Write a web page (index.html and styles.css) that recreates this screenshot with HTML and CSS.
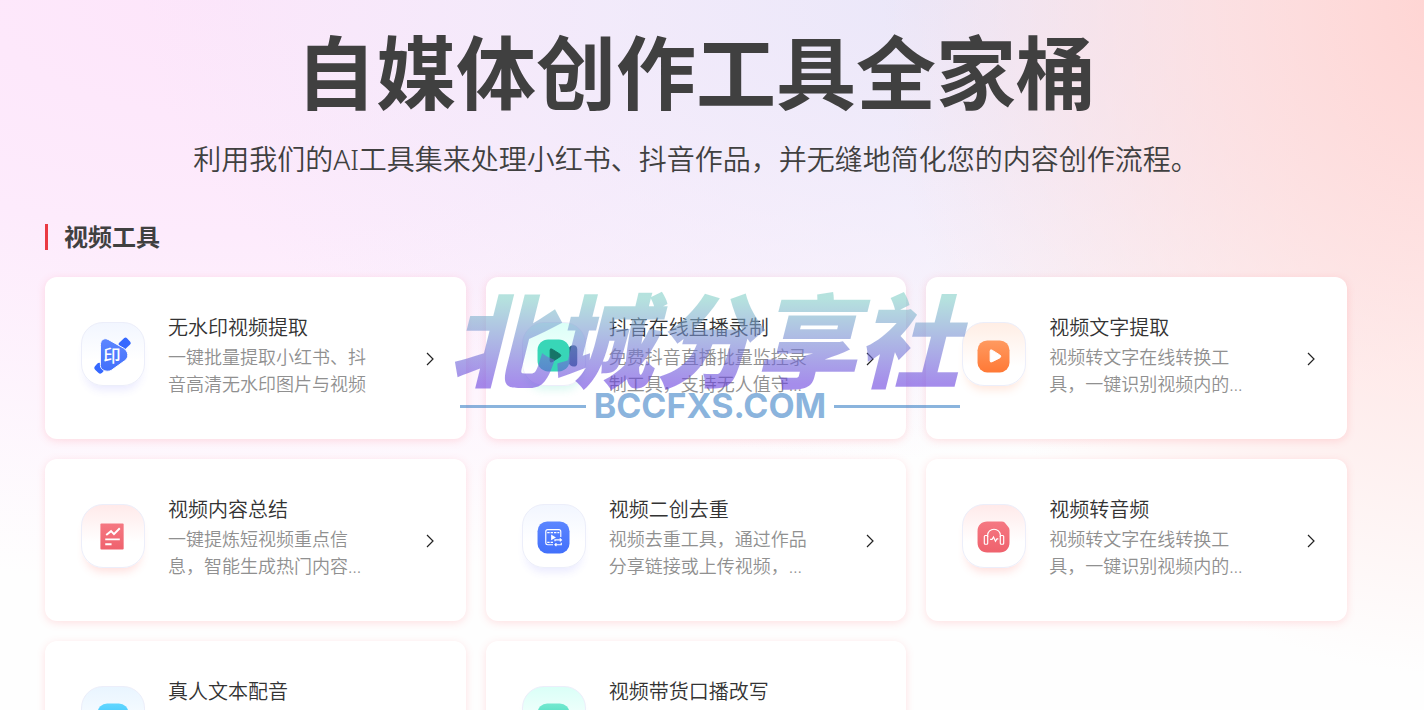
FILE: index.html
```
<!DOCTYPE html>
<html lang="zh-CN">
<head>
    <meta charset="UTF-8">
    <meta name="viewport" content="width=device-width, initial-scale=1.0">
    <title>自媒体创作工具全家桶</title>
    <link rel="stylesheet" href="styles.css">
</head>
<body>
    <main class="page">
        <header class="hero">
            <h1>自媒体创作工具全家桶</h1>
            <p>利用我们的AI工具集来处理小红书、抖音作品，并无缝地简化您的内容创作流程。</p>
        </header>

        <section>
            <h2 class="section-title">视频工具</h2>
            <div class="tools">
                <a class="card" href="#">
                    <svg class="icon icon-blue" viewBox="0 0 64 64" aria-hidden="true">
                        <defs>
                            <linearGradient id="blue" x1="0" y1="0" x2="0" y2="1">
                                <stop offset="0" stop-color="#5c86ff"/>
                                <stop offset="1" stop-color="#4270fb"/>
                            </linearGradient>
                        </defs>
                        <rect x="39" y="17" width="11" height="9" rx="2" transform="rotate(-42 44 22)" fill="#3568ff"/>
                        <rect x="13" y="42" width="10" height="9" rx="3" transform="rotate(42 18 47)" fill="#3568ff"/>
                        <path d="M19 23c0-6 4-8 8-6l16 9c5 3 6 10 1 13L30 49c-4 2-11 0-11-5z" fill="url(#blue)" stroke="#fff" stroke-width="1"/>
                        <text x="31" y="40" text-anchor="middle" class="stamp">印</text>
                    </svg>
                    <div class="info">
                        <h3>无水印视频提取</h3>
                        <p>一键批量提取小红书、抖音高清无水印图片与视频</p>
                    </div>
                    <svg class="arrow" viewBox="0 0 8 14" aria-hidden="true"><path d="M1 1l6 6-6 6"/></svg>
                </a>
                <a class="card" href="#">
                    <svg class="icon icon-green" viewBox="0 0 64 64" aria-hidden="true">
                        <path d="M47 26c1-2 3-3 5-3 3 0 4 2 4 4v14c0 3-1 4-4 4-2 0-4-2-5-4z" fill="#316587"/>
                        <rect x="15" y="17" width="33" height="33" rx="11" fill="#38d6b7"/>
                        <path d="M28 28q0-2 2-1l8 5q2 2 0 3l-8 5q-2 1-2-1z" fill="#167568" stroke="#167568"/>
                    </svg>
                    <div class="info">
                        <h3>抖音在线直播录制</h3>
                        <p>免费抖音直播批量监控录制工具，支持无人值守…</p>
                    </div>
                    <svg class="arrow" viewBox="0 0 8 14" aria-hidden="true"><path d="M1 1l6 6-6 6"/></svg>
                </a>
                <a class="card" href="#">
                    <svg class="icon icon-orange" viewBox="0 0 64 64" aria-hidden="true">
                        <defs>
                            <linearGradient id="orange" x1="0" y1="0" x2="0" y2="1">
                                <stop offset="0" stop-color="#ff9a60"/>
                                <stop offset="1" stop-color="#ff7936"/>
                            </linearGradient>
                        </defs>
                        <rect x="15" y="18" width="33" height="33" rx="10" fill="url(#orange)"/>
                        <path d="M28 29q0-2 2-1l8 5q2 1 0 3l-8 4q-2 1-2-1z" fill="#fff" stroke="#fff"/>
                    </svg>
                    <div class="info">
                        <h3>视频文字提取</h3>
                        <p>视频转文字在线转换工具，一键识别视频内的…</p>
                    </div>
                    <svg class="arrow" viewBox="0 0 8 14" aria-hidden="true"><path d="M1 1l6 6-6 6"/></svg>
                </a>
                <a class="card" href="#">
                    <svg class="icon icon-red" viewBox="0 0 64 64" aria-hidden="true">
                        <defs>
                            <linearGradient id="red" x1="0" y1="0" x2="0" y2="1">
                                <stop offset="0" stop-color="#f57882"/>
                                <stop offset="1" stop-color="#ef626d"/>
                            </linearGradient>
                        </defs>
                        <rect x="19" y="19" width="24" height="27" rx="1" fill="url(#red)"/>
                        <path d="M25 31l5-4 3 3 6-6M24 35.500h15M24 40.500h6.500" fill="none" stroke="#fff" stroke-width="2"/>
                    </svg>
                    <div class="info">
                        <h3>视频内容总结</h3>
                        <p>一键提炼短视频重点信息，智能生成热门内容…</p>
                    </div>
                    <svg class="arrow" viewBox="0 0 8 14" aria-hidden="true"><path d="M1 1l6 6-6 6"/></svg>
                </a>
                <a class="card" href="#">
                    <svg class="icon icon-blue" viewBox="0 0 64 64" aria-hidden="true">
                        <rect x="15" y="17" width="33" height="33" rx="10" fill="url(#blue)"/>
                        <g fill="none" stroke="#fff" stroke-width="1.200">
                            <path d="M31 41h-5.500a2 2 0 0 1-2-2V27.500a2 2 0 0 1 2-2H37a2 2 0 0 1 2 2V33"/>
                            <path d="M25 28.500h12.500" stroke-dasharray="2.500 1"/>
                            <path d="M25 38.500h6" stroke-dasharray="2.500 1"/>
                            <path d="M33 37.500V36h6.500M38 34.500l1.700 1.500-1.700 1.500M39.500 39v2H33M34.500 39.500L33 41l1.500 1.500"/>
                        </g>
                        <path d="M29 30.500l5 3-5 3z" fill="#fff"/>
                    </svg>
                    <div class="info">
                        <h3>视频二创去重</h3>
                        <p>视频去重工具，通过作品分享链接或上传视频，…</p>
                    </div>
                    <svg class="arrow" viewBox="0 0 8 14" aria-hidden="true"><path d="M1 1l6 6-6 6"/></svg>
                </a>
                <a class="card" href="#">
                    <svg class="icon icon-red" viewBox="0 0 64 64" aria-hidden="true">
                        <path d="M25 17h15q2 0 3 1l4 5q1 1 1 3v13c0 6-4 10-10 10H25c-6 0-10-4-10-10V27c0-6 4-10 10-10z" fill="url(#red)"/>
                        <g fill="none" stroke="#fff" stroke-width="1.200">
                            <rect x="22" y="31.500" width="3.500" height="9" rx="1"/>
                            <rect x="38.500" y="31.500" width="3.500" height="9" rx="1"/>
                            <path d="M25.500 33v-2a6.500 6 0 0 1 13 0v2M28 35.500h2l1.500-2.500 2 4.500 1.500-2.500h1.500"/>
                        </g>
                    </svg>
                    <div class="info">
                        <h3>视频转音频</h3>
                        <p>视频转文字在线转换工具，一键识别视频内的…</p>
                    </div>
                    <svg class="arrow" viewBox="0 0 8 14" aria-hidden="true"><path d="M1 1l6 6-6 6"/></svg>
                </a>
                <a class="card" href="#">
                    <svg class="icon icon-sky" viewBox="0 0 64 64" aria-hidden="true">
                        <defs>
                            <linearGradient id="sky" x1="0" y1="0" x2="0" y2="1">
                                <stop offset="0" stop-color="#62d7ff"/>
                                <stop offset="1" stop-color="#23b5fa"/>
                            </linearGradient>
                        </defs>
                        <rect x="16" y="17" width="32" height="32" rx="10" fill="url(#sky)"/>
                    </svg>
                    <div class="info">
                        <h3>真人文本配音</h3>
                    </div>
                </a>
                <a class="card" href="#">
                    <svg class="icon icon-green" viewBox="0 0 64 64" aria-hidden="true">
                        <defs>
                            <linearGradient id="green" x1="0" y1="0" x2="0" y2="1">
                                <stop offset="0" stop-color="#74e9d0"/>
                                <stop offset="1" stop-color="#25cfad"/>
                            </linearGradient>
                        </defs>
                        <rect x="15" y="17" width="33" height="33" rx="10" fill="url(#green)"/>
                    </svg>
                    <div class="info">
                        <h3>视频带货口播改写</h3>
                    </div>
                </a>
            </div>
        </section>

        <div class="watermark">
            <div class="watermark-name">北城分享社</div>
            <div class="watermark-site">BCCFXS.COM</div>
        </div>
    </main>
</body>
</html>
```
FILE: styles.css
```
* {
    box-sizing: border-box;
}
body {
    margin: 0;
    font-family: "Noto Sans", "Noto Sans CJK SC", sans-serif;
    color: #404040;
}
h1, h2, h3, p {
    margin: 0;
}
.page {
    position: relative;
    height: 100vh;
    overflow: hidden;
    padding: 22px 77px 0 45px;
    background:
        radial-gradient(ellipse 40% 95% at 102% 0%, #ffd4d2 0%, rgba(255, 219, 218, 0.75) 40%, rgba(255, 235, 235, 0) 100%),
        radial-gradient(ellipse 55% 65% at 65% 0%, #ebe7f9 0%, rgba(238, 234, 250, 0.75) 40%, rgba(248, 246, 255, 0) 100%),
        radial-gradient(ellipse 80% 82% at 15% 0%, #fde5fa 0%, #fdebfc 40%, rgba(255, 255, 255, 0) 100%),
        #fefefe;
}
.hero {
    text-align: center;
}
.hero h1 {
    font-size: 80px;
    line-height: 100px;
    font-weight: 700;
}
.hero p {
    margin-top: 16px;
    font-size: 28px;
    line-height: 42px;
    font-weight: 350;
}
.section-title {
    display: flex;
    align-items: center;
    gap: 16px;
    margin: 42px 0 25px;
    font-size: 24px;
    line-height: 30px;
    font-weight: 700;
}
.section-title::before {
    content: "";
    width: 3px;
    height: 26px;
    background: #ea3943;
}
.tools {
    display: grid;
    grid-template-columns: repeat(3, 1fr);
    gap: 20px;
}
.card {
    display: flex;
    align-items: flex-start;
    min-height: 162px;
    padding: 36px 32px 34px 36px;
    background: #fff;
    border-radius: 12px;
    box-shadow: 0 2px 8px rgba(255, 90, 100, 0.18);
    color: #333;
    text-decoration: none;
}
.icon {
    flex: none;
    width: 64px;
    height: 64px;
    margin-top: 9px;
    border: 1px solid #eceefa;
    border-radius: 22px;
}
.icon-blue {
    background: linear-gradient(#f2f6ff, #fff 60%);
    box-shadow: 0 8px 8px -4px rgba(80, 80, 255, 0.12);
}
.icon-green {
    background: linear-gradient(#dafff7, #fff 75%);
    box-shadow: 0 8px 8px -4px rgba(50, 214, 180, 0.18);
}
.icon-orange {
    background: linear-gradient(#ffeee5, #fff 70%);
    box-shadow: 0 8px 8px -4px rgba(255, 130, 70, 0.18);
}
.icon-red {
    background: linear-gradient(#ffeaea, #fff 60%);
    box-shadow: 0 8px 8px -4px rgba(255, 90, 80, 0.18);
}
.icon-sky {
    background: linear-gradient(#e9f5ff, #fff 80%);
}
.stamp {
    fill: #fff;
    font-size: 18px;
    font-weight: 500;
}
.info {
    width: 200px;
    margin-left: 23px;
}
.info h3 {
    font-size: 20px;
    line-height: 30px;
    font-weight: 350;
}
.info p {
    margin-top: 1px;
    font-size: 18px;
    line-height: 27px;
    font-weight: 350;
    color: #909090;
}
.arrow {
    width: 8px;
    height: 14px;
    margin-left: auto;
    align-self: center;
    fill: none;
    stroke: #222;
    stroke-width: 1.2;
}

/* watermark over the cards */
.watermark {
    position: absolute;
    top: 290px;
    left: 50%;
    width: 540px;
    margin-left: -272px;
    pointer-events: none;
}
.watermark-name {
    padding-right: 12px;
    font-size: 102px;
    line-height: 102px;
    font-style: italic;
    font-weight: 900;
    text-align: center;
    white-space: nowrap;
    color: transparent;
    background: linear-gradient(rgba(132, 207, 200, 0.6) 8%, rgba(105, 65, 222, 0.6) 92%);
    -webkit-background-clip: text;
    background-clip: text;
}
.watermark-site {
    display: flex;
    align-items: center;
    gap: 8px;
    padding: 0 20px;
    font-family: Inter, sans-serif;
    font-size: 34px;
    line-height: 28px;
    font-weight: 700;
    color: rgba(60, 130, 198, 0.6);
}
.watermark-site::before,
.watermark-site::after {
    content: "";
    flex: 1;
    height: 3px;
    background: rgba(60, 130, 198, 0.6);
}
```
